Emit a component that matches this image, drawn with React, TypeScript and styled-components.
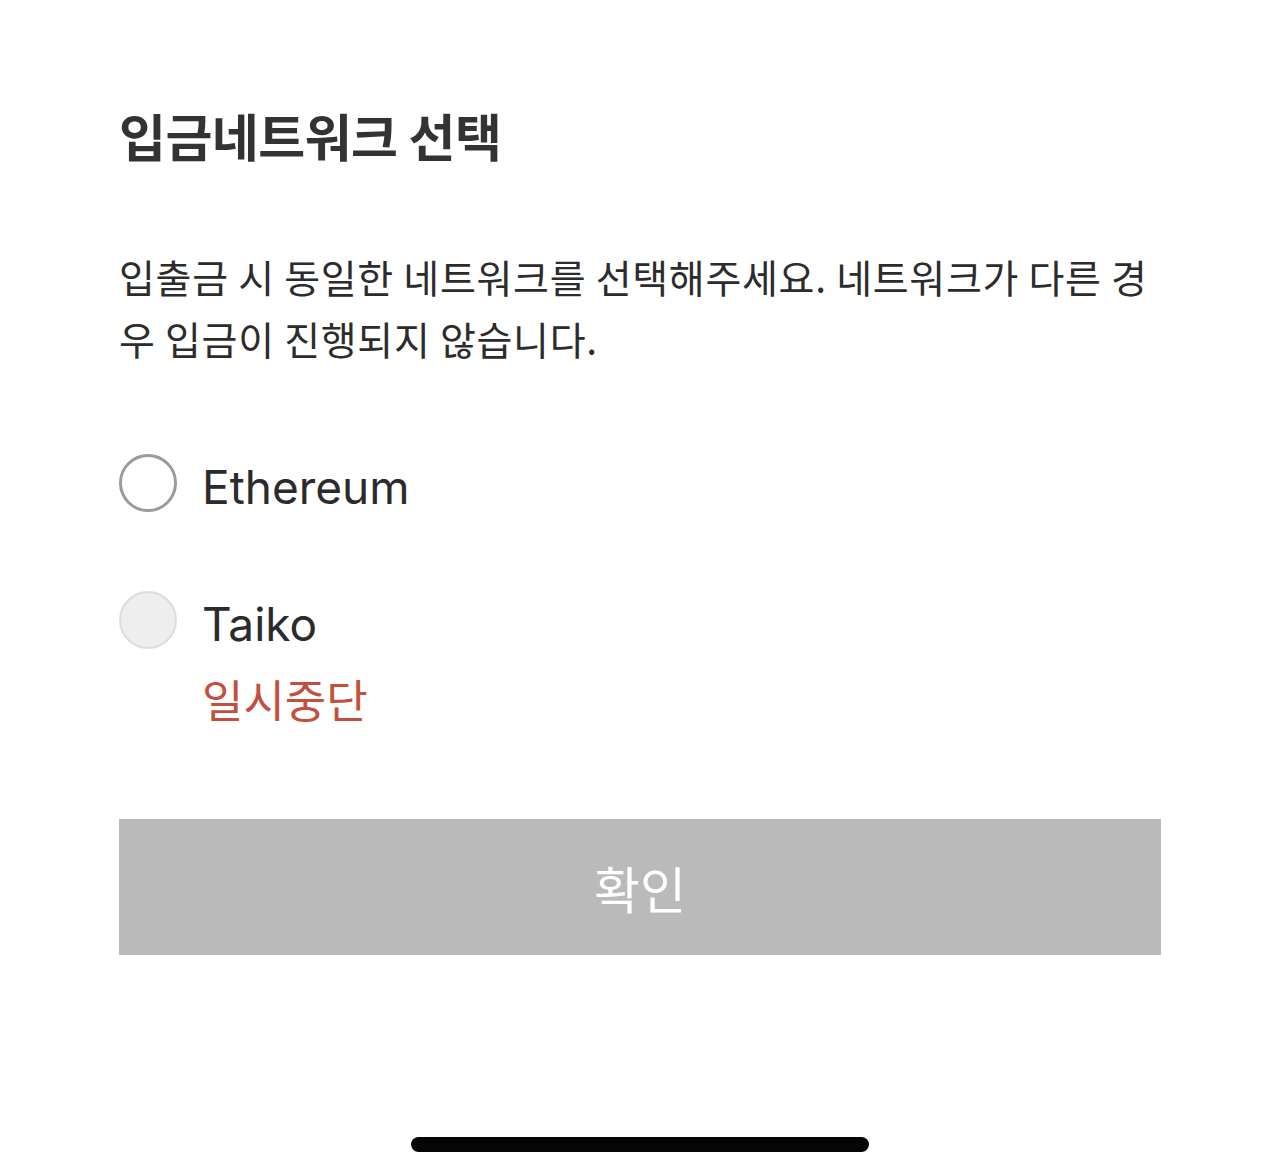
import React from "react";
import styled, { createGlobalStyle } from "styled-components";

const Global = createGlobalStyle`
  html, body { margin: 0; padding: 0; background: #ffffff; }
  body { font-family: Inter, "Noto Sans CJK KR", sans-serif; }
`;

const Page = styled.div`
  width: 1280px;
  min-height: 1176px;
  box-sizing: border-box;
  padding: 105px 119px 0;
  display: flex;
  flex-direction: column;
  background: #fff;
`;

const Title = styled.h1`
  margin: 0;
  font-family: "Noto Sans CJK KR", sans-serif;
  font-weight: 700;
  font-size: 51px;
  line-height: 60px;
  letter-spacing: -0.5px;
  color: #333333;
`;

const Description = styled.p`
  margin: 80px 0 0;
  font-family: "Noto Sans CJK KR", sans-serif;
  font-weight: 400;
  font-size: 39px;
  line-height: 62px;
  letter-spacing: 0.7px;
  color: #2c2c2c;
  word-break: break-all;
`;

const OptionList = styled.div`
  margin-top: 85px;
  display: flex;
  flex-direction: column;
  gap: 71px;
`;

const Option = styled.label`
  display: flex;
  align-items: flex-start;
  gap: 25px;
`;

const Circle = styled.span<{ $disabled?: boolean }>`
  flex: none;
  width: 58px;
  height: 58px;
  box-sizing: border-box;
  border-radius: 50%;
  border: ${(p) => (p.$disabled ? "2px solid #dcdcdc" : "3px solid #9b9b9b")};
  background: ${(p) => (p.$disabled ? "#eeeeee" : "#ffffff")};
`;

const LabelColumn = styled.div`
  display: flex;
  flex-direction: column;
`;

const Name = styled.span`
  font-family: Inter, "Noto Sans CJK KR", sans-serif;
  font-size: 46px;
  line-height: 66px;
  color: #2b2b2b;
`;

const Status = styled.span`
  margin-top: 17px;
  font-family: "Noto Sans CJK KR", sans-serif;
  font-size: 45px;
  line-height: 50px;
  color: #c2503c;
`;

const ConfirmButton = styled.button`
  margin-top: 95px;
  height: 136px;
  width: 100%;
  border: none;
  background: #bababa;
  color: #ffffff;
  font-family: "Noto Sans CJK KR", sans-serif;
  font-size: 50px;
  display: flex;
  align-items: center;
  justify-content: center;
  padding: 0;
`;

const HomeIndicator = styled.div`
  margin: 182px auto 0;
  width: 458px;
  height: 15px;
  border-radius: 8px;
  background: #050505;
`;

export default function App() {
  return (
    <>
      <Global />
      <Page>
        <Title>입금네트워크 선택</Title>
        <Description>
          입출금 시 동일한 네트워크를 선택해주세요. 네트워크가 다른 경우 입금이 진행되지 않습니다.
        </Description>
        <OptionList>
          <Option>
            <Circle />
            <LabelColumn>
              <Name>Ethereum</Name>
            </LabelColumn>
          </Option>
          <Option>
            <Circle $disabled />
            <LabelColumn>
              <Name>Taiko</Name>
              <Status>일시중단</Status>
            </LabelColumn>
          </Option>
        </OptionList>
        <ConfirmButton>확인</ConfirmButton>
        <HomeIndicator />
      </Page>
    </>
  );
}
